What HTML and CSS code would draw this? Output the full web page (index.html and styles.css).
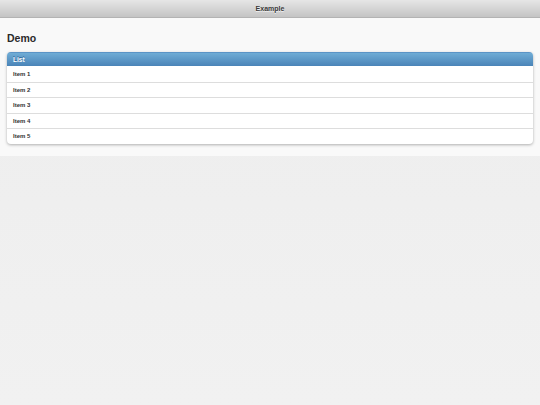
FILE: index.html
```html
<!doctype html>
<html lang="en">
<head>
<meta charset="UTF-8">
<title>Example</title>
<link rel="stylesheet" href="styles.css">
</head>
<body>
	<div class="page">
		<div class="header"><h1>Example</h1></div>
		<div class="content">
			<h2>Demo</h2>
			<ul class="listview">
				<li class="divider">List</li>
				<li>Item 1</li>
				<li>Item 2</li>
				<li>Item 3</li>
				<li>Item 4</li>
				<li>Item 5</li>
			</ul>
		</div>
	</div>
</body>
</html>
```
FILE: styles.css
```css
* {margin:0;padding:0;}
html,body{height:100%;}
body{font-family:"Liberation Sans",Arial,sans-serif;background:linear-gradient(#ededed,#f1f1f1);color:#333;}
ul,li{list-style:none;}
.page{display:flex;flex-direction:column;}
.header{height:17px;background:linear-gradient(#e6e6e6,#c4c4c4);border-bottom:1px solid #b3b3b3;display:flex;align-items:center;justify-content:center;}
.header h1{font-size:7px;font-weight:bold;color:#3a3a3a;text-shadow:0 1px 0 #eee;}
.content{background:#f9f9f9;padding:14px 7px 12px;}
.content h2{font-size:10.5px;font-weight:bold;color:#2a2a2a;margin-bottom:7px;line-height:13px;}
.listview{border-radius:4px;box-shadow:0 1px 3px rgba(0,0,0,.3);overflow:hidden;background:#fff;}
.listview li{height:14.5px;border-top:1px solid #ddd;font-size:6px;font-weight:bold;color:#333;padding-left:6px;display:flex;align-items:center;}
.listview li:nth-child(2){border-top:0;height:15.5px;}
.listview .divider{height:13px;font-size:6.5px;background:linear-gradient(#6facd5,#4a84b8);border-top:1px solid #5b94c6;color:#fff;text-shadow:0 -1px 0 #2d6595;}
```
